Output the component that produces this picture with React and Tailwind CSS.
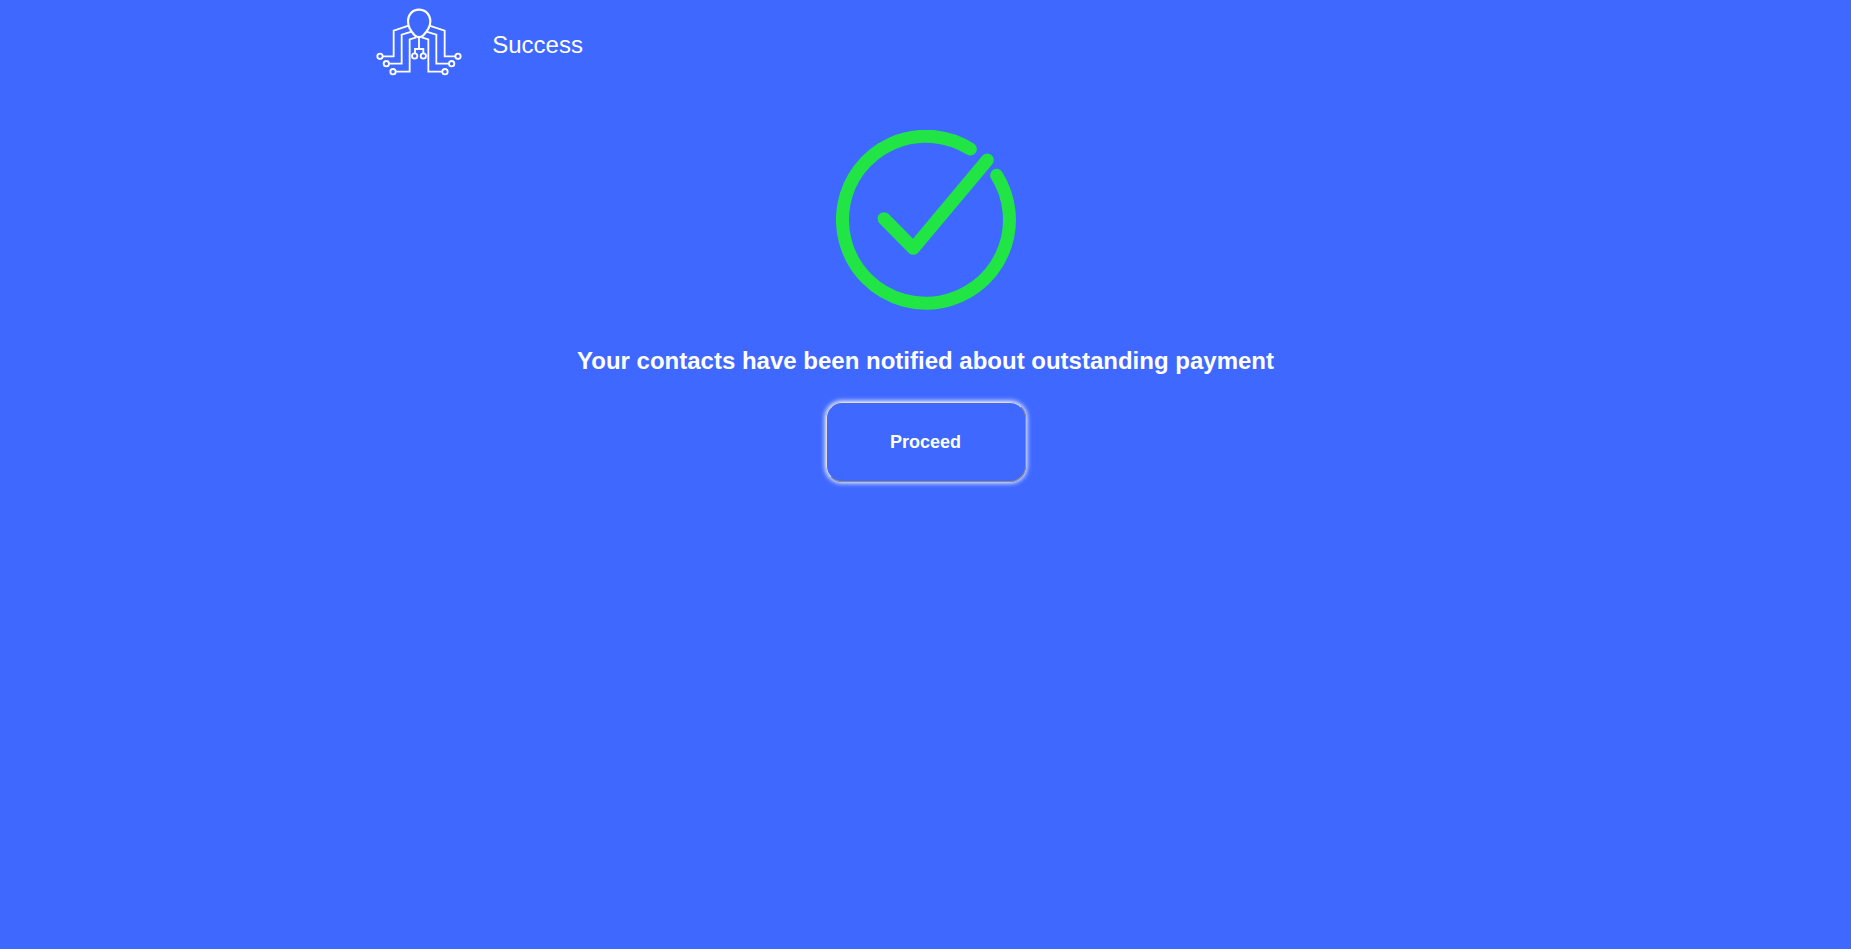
function Logo() {
  return (
    <svg viewBox="0 0 300 252" className="w-[100px] h-[84px] shrink-0" fill="none" stroke="#fff" strokeWidth="5.5">
      <path strokeWidth="6.5" d="M147 29C127 29 114 44 114 64C114 84 126 98 135 107Q147 116 159 107C168 98 181 84 181 64C181 44 167 29 147 29Z" />
      <path d="M116 77L71 92V169H39M178 77L224 92V169H255" />
      <path d="M125 95L95 104V191H58M169 95L199 104V191H236" />
      <path d="M139 112L119 118V215H78M155 112L175 118V215H216" />
      <path d="M147 112V146M135 160V147H160V160" />
      <circle cx="30" cy="169" r="8" />
      <circle cx="264" cy="169" r="8" />
      <circle cx="49" cy="191" r="8" />
      <circle cx="245" cy="191" r="8" />
      <circle cx="69" cy="215" r="8" />
      <circle cx="225" cy="215" r="8" />
      <circle cx="134" cy="168" r="8" />
      <circle cx="160" cy="168" r="8" />
    </svg>
  );
}

function SuccessIcon() {
  return (
    <svg
      viewBox="0 0 540 540"
      className="w-[180px] h-[180px]"
      fill="none"
      stroke="#20e545"
      strokeWidth="39"
      strokeLinecap="round"
      strokeLinejoin="round"
    >
      <path d="M403 57A250.5 250.5 0 1 0 482 136" />
      <path d="M144 266L232 355L454 90" />
    </svg>
  );
}

export default function App() {
  return (
    <div className="min-h-screen bg-[#3e68ff] text-white font-['Liberation_Sans',Arial,sans-serif]">
      <div className="w-3/5 mx-auto">
        <header className="flex items-start gap-[22px]">
          <Logo />
          <h1 className="pt-[29px] text-2xl">Success</h1>
        </header>
        <main className="flex flex-col items-center pt-[46px]">
          <SuccessIcon />
          <h2 className="mt-[35px] text-2xl font-bold text-center">
            Your contacts have been notified about outstanding payment
          </h2>
          <button
            type="button"
            className="mt-[25px] w-[200px] h-20 rounded-2xl border [border-style:outset] border-[#e0ddd8] shadow-[0_0_5px_1px_#fff] text-lg font-bold cursor-pointer"
          >
            Proceed
          </button>
        </main>
      </div>
    </div>
  );
}
